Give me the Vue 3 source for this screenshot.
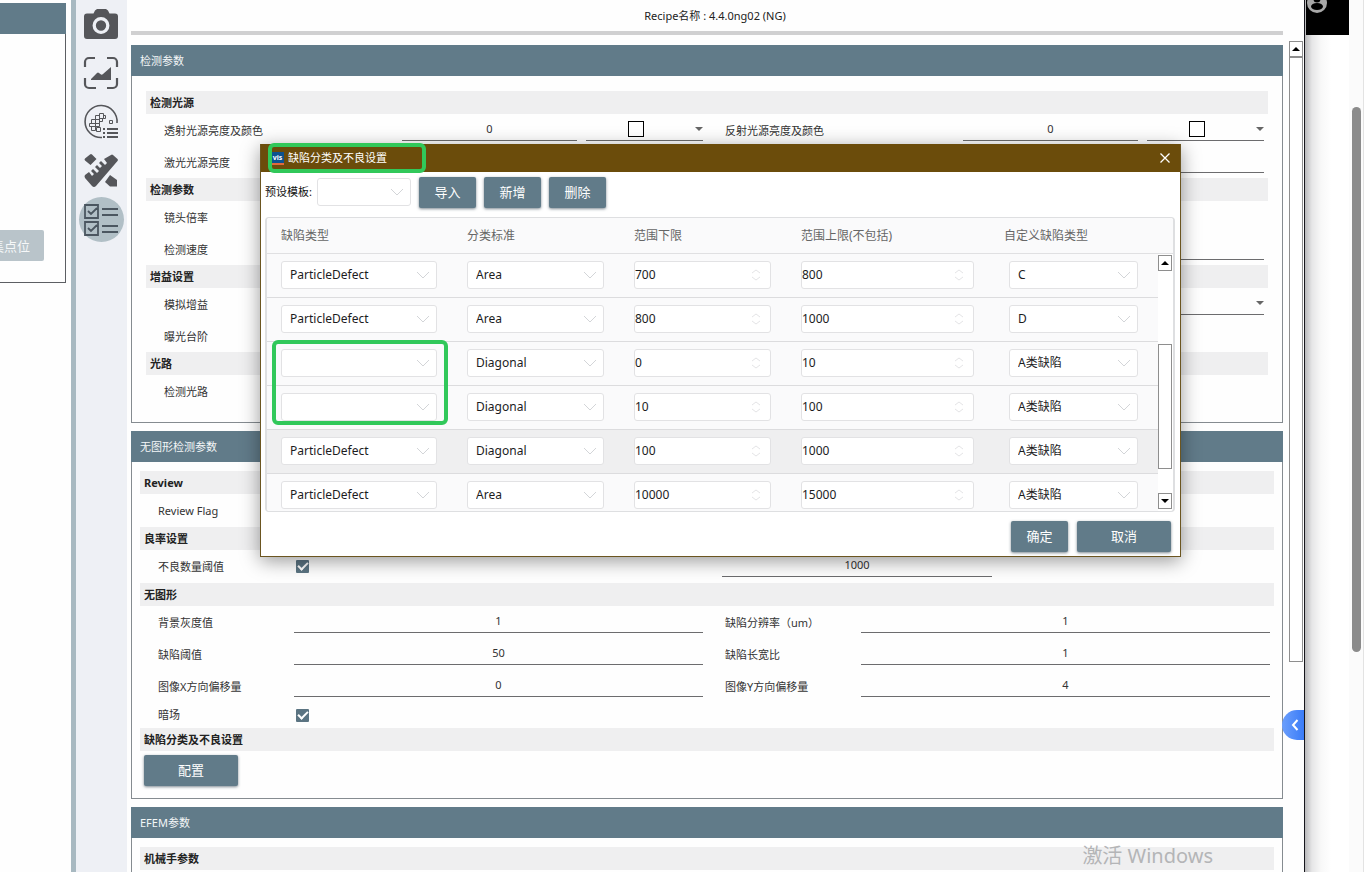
<script setup>
import { ref } from 'vue'

const lightRow = ['透射光源亮度及颜色', '反射光源亮度及颜色']

const grayRows = [
  { a: '背景灰度值', av: '1', b: '缺陷分辨率（um）', bv: '1' },
  { a: '缺陷阈值', av: '50', b: '缺陷长宽比', bv: '1' },
  { a: '图像X方向偏移量', av: '0', b: '图像Y方向偏移量', bv: '4' },
]

const columns = ['缺陷类型', '分类标准', '范围下限', '范围上限(不包括)', '自定义缺陷类型']

const rules = ref([
  { type: 'ParticleDefect', std: 'Area', low: '700', high: '800', cls: 'C' },
  { type: 'ParticleDefect', std: 'Area', low: '800', high: '1000', cls: 'D' },
  { type: '', std: 'Diagonal', low: '0', high: '10', cls: 'A类缺陷' },
  { type: '', std: 'Diagonal', low: '10', high: '100', cls: 'A类缺陷' },
  { type: 'ParticleDefect', std: 'Diagonal', low: '100', high: '1000', cls: 'A类缺陷', active: true },
  { type: 'ParticleDefect', std: 'Area', low: '10000', high: '15000', cls: 'A类缺陷' },
])
</script>

<template>
  <div class="screen">
    <aside class="left">
      <div class="left-head"></div>
      <div class="left-body">
        <button class="point" type="button" disabled>集点位</button>
      </div>
    </aside>
    <div class="divider"></div>

    <nav class="rail">
      <button type="button" aria-label="相机">
        <svg viewBox="0 0 36 36" width="36" height="36"><path fill="#55565a" d="M12 4.500l2-1.500h9l2 1.500 1.500 3H32a3 3 0 0 1 3 3V30a3 3 0 0 1-3 3H4a3 3 0 0 1-3-3V10.500a3 3 0 0 1 3-3h6.500z" /><circle cx="18" cy="19.500" r="6.800" fill="none" stroke="#eef0f5" stroke-width="3.300" /></svg>
      </button>
      <button type="button" aria-label="图像">
        <svg viewBox="0 0 36 36" width="36" height="36" fill="none" stroke="#55565a" stroke-width="2.200"><path d="M2 12V7a4 4 0 0 1 4-4h6M24 3h6a4 4 0 0 1 4 4v5M34 23v6a4 4 0 0 1-4 4h-6M13 33H6a4 4 0 0 1-4-4v-6" /><path d="M8 25v-1l6-6q1-1 2 0l2 1.500q1 .5 2-.5l8-7v13z" fill="#55565a" stroke="none" /></svg>
      </button>
      <button type="button" aria-label="晶圆">
        <svg viewBox="0 0 36 36" width="36" height="36" fill="none" stroke="#55565a"><path stroke-width="1.600" d="M19 33.500A16 16 0 1 1 34 19" /><path stroke-width="1" d="M12.500 11.500h4v4h-4zM8.500 15.500h4v4h-4zM12.500 15.500h4v4h-4zM6.500 19.500h6v3h-6zM12.500 19.500h4v3h-4zM8.500 22.500h4v4h-4zM13.500 23.500h4v4h-4zM16.500 9.500h4v5h-4zM20.500 11.500h2v3h-2zM26.500 16.500h3v3h-3zM16.500 14.500h3v3h-3z" /><path stroke-width="2" d="M24 25h11M24 29h11M24 33h11M20 25h2M20 29h2M20 33h2" /></svg>
      </button>
      <button type="button" aria-label="测量">
        <svg viewBox="0 0 36 36" width="36" height="36" fill="#55565a"><path d="M7 1.500q1-1 2 0L13.500 6 7.500 12 2 7.500q-1-1 0-2z" /><path d="M28 2q1-1 2 0l4.500 4q1 1 0 2L13 33q-2 2-4 0l-7-8q-1-2 0-3l4-3 3 4 2-2-3-3 2-2 4 4 2-2-4-4 2-2 3 3 2-2-3-3 2-2 4 4 2-2-3-4z" /><path d="M27 22l7 5v6.500h-7L22 29z" /></svg>
      </button>
      <button type="button" class="on" aria-label="配方参数">
        <svg viewBox="0 0 36 36" width="36" height="36" fill="none" stroke="#4b5660" stroke-width="1.800"><path d="M2 3h13v13H2zM2 20h13v13H2zM5 9l3 3 6-6M5 26l3 3 6-6M19 7h16M19 13h16M19 24h16M19 30h16" /></svg>
      </button>
    </nav>

    <main class="main">
      <header class="title">Recipe名称 : 4.4.0ng02 (NG)</header>
      <div class="scroller">
        <div class="panels">
          <section class="panel">
            <h2>检测参数</h2>
            <div class="body wide">
              <h3>检测光源</h3>
              <div class="pair">
                <div v-for="(t, i) in lightRow" :key="t" class="half light">
                  <label :for="'l' + i">{{ t }}</label>
                  <input :id="'l' + i" class="line" value="0" />
                  <span class="color">
                    <span class="swatch"></span>
                    <select :aria-label="t + ' 颜色'" class="line"><option></option></select>
                    <i class="tri"></i>
                  </span>
                </div>
              </div>
              <div class="single"><label for="laser">激光光源亮度</label><input id="laser" class="line" /></div>
              <h3>检测参数</h3>
              <div class="single"><label>镜头倍率</label></div>
              <div class="single"><label for="speed">检测速度</label><input id="speed" class="line" /></div>
              <h3>增益设置</h3>
              <div class="single">
                <label for="gain">模拟增益</label>
                <span class="color"><select id="gain" class="line"><option></option></select><i class="tri"></i></span>
              </div>
              <div class="single"><label>曝光台阶</label></div>
              <h3>光路</h3>
              <div class="single"><label>检测光路</label></div>
            </div>
          </section>

          <section class="panel">
            <h2>无图形检测参数</h2>
            <div class="body">
              <h3>Review</h3>
              <div class="group"><div class="single"><label>Review Flag</label></div></div>
              <h3>良率设置</h3>
              <div class="group pair">
                <div class="half tick"><label for="ng">不良数量阈值</label><input id="ng" type="checkbox" checked /></div>
                <div class="limit"><input class="line" aria-label="不良数量阈值" value="1000" /></div>
              </div>
              <h3>无图形</h3>
              <div v-for="(r, i) in grayRows" :key="r.a" class="pair">
                <div class="half"><label :for="'a' + i">{{ r.a }}</label><input :id="'a' + i" class="line" :value="r.av" /></div>
                <div class="half"><label :for="'b' + i">{{ r.b }}</label><input :id="'b' + i" class="line" :value="r.bv" /></div>
              </div>
              <div class="pair short">
                <div class="half tick"><label for="dark">暗场</label><input id="dark" type="checkbox" checked /></div>
              </div>
              <h3>缺陷分类及不良设置</h3>
              <button class="btn large config" type="button">配置</button>
            </div>
          </section>

          <section class="panel">
            <h2>EFEM参数</h2>
            <div class="body">
              <h3>机械手参数</h3>
              <div class="single"></div>
            </div>
          </section>
        </div>
        <div class="vbar">
          <span class="cap"><i class="up"></i></span>
          <span class="thumb"></span>
        </div>
      </div>
    </main>

    <aside class="outer">
      <div class="page">
        <div class="black">
          <svg viewBox="0 0 20 20" width="20" height="20"><circle cx="10" cy="10" r="10" fill="#a8a8a8" /><circle cx="10" cy="6" r="3.500" fill="#000" /><ellipse cx="10" cy="13.500" rx="6" ry="3.500" fill="#000" /></svg>
        </div>
      </div>
      <div class="track"><span></span></div>
    </aside>

    <button class="drawer" type="button" aria-label="展开">
      <svg viewBox="0 0 8 14" width="8" height="14"><path d="M6.500 2L2 7l4.500 5" fill="none" stroke="#fff" stroke-width="2" /></svg>
    </button>

    <div class="watermark">激活 Windows</div>

    <div class="dialog" role="dialog" aria-label="缺陷分类及不良设置">
      <div class="bar">
        <span class="logo">vis</span>
        <span class="name">缺陷分类及不良设置</span>
        <button type="button" class="close" aria-label="关闭">
          <svg viewBox="0 0 12 12" width="12" height="12"><path d="M1.500 1.500l9 9M10.500 1.500l-9 9" stroke="#fff" stroke-width="1.300" /></svg>
        </button>
      </div>
      <div class="tools">
        <label for="tpl">预设模板:</label>
        <span class="box tpl">
          <select id="tpl"><option></option></select>
          <svg class="chev" viewBox="0 0 14 8" width="14" height="8"><path d="M1 1l6 6 6-6" /></svg>
        </span>
        <button class="btn" type="button">导入</button>
        <button class="btn" type="button">新增</button>
        <button class="btn" type="button">删除</button>
      </div>
      <div class="grid">
        <div class="clip">
          <table>
            <colgroup><col class="c1" /><col class="c2" /><col class="c3" /><col class="c4" /><col class="c5" /></colgroup>
            <thead>
              <tr><th v-for="c in columns" :key="c">{{ c }}</th></tr>
            </thead>
            <tbody>
              <tr v-for="(r, i) in rules" :key="i" :class="{ active: r.active }">
                <td v-for="k in ['type', 'std', 'low', 'high', 'cls']" :key="k" :class="{ last: k === 'cls' }">
                  <span v-if="k === 'low' || k === 'high'" class="box num">
                    <input v-model="r[k]" :aria-label="k === 'low' ? '范围下限' : '范围上限'" />
                    <svg class="spin" viewBox="0 0 10 12" width="10" height="12"><path d="M1 4l4-3 4 3M1 8l4 3 4-3" /></svg>
                  </span>
                  <span v-else class="box">
                    <select :aria-label="k"><option>{{ r[k] }}</option></select>
                    <svg class="chev" viewBox="0 0 14 8" width="14" height="8"><path d="M1 1l6 6 6-6" /></svg>
                  </span>
                </td>
              </tr>
            </tbody>
          </table>
        </div>
        <div class="side">
          <div class="side-head"></div>
          <div class="side-bar">
            <span class="cap"><i class="up"></i></span>
            <span class="thumb"></span>
            <span class="cap"><i class="down"></i></span>
          </div>
        </div>
      </div>
      <div class="foot">
        <button class="btn" type="button">确定</button>
        <button class="btn large" type="button">取消</button>
      </div>
      <div class="mark mark-title"></div>
      <div class="mark mark-rows"></div>
    </div>
  </div>
</template>

<style>
html, body { margin: 0; overflow: hidden; background: #fff; }
</style>

<style scoped>
.screen, .screen * { box-sizing: border-box; }
.screen {
  position: relative; display: flex; height: 100vh; overflow: hidden; background: #fefefe;
  font: 11px/16px "Noto Sans", "Noto Sans CJK SC", sans-serif; color: #333;
}
button, input, select { font: inherit; color: inherit; margin: 0; border: 0; padding: 0; background: none; outline: 0; }
select { appearance: none; border-radius: 0; }
h2, h3 { margin: 0; }

.left { width: 66px; padding-top: 3px; flex: none; overflow: hidden; }
.left-head { height: 31px; background: #617b89; }
.left-body { height: 249px; border: 1px solid #5c5f63; border-width: 0 1px 1px 0; padding-top: 196px; }
.point { width: 44px; height: 31px; border-radius: 0 2px 2px 0; background: #b9c4ca; color: #f6f8f9; font-size: 13px; white-space: nowrap; display: flex; justify-content: flex-end; align-items: center; padding-right: 14px; overflow: hidden; }
.divider { flex: none; width: 5px; margin-left: 5px; background: #a8b9c1; }
.rail { flex: none; width: 51px; background: #eef0f5; display: flex; flex-direction: column; align-items: center; gap: 4px; padding-top: 1px; }
.rail button { width: 45px; height: 45px; border-radius: 50%; display: flex; align-items: center; justify-content: center; padding-right: 1px; }
.rail .on { background: #b1bfc6; }

.main { flex: 1; min-width: 0; margin-left: 4px; display: flex; flex-direction: column; border-right: 1px solid #16161c; }
.title { height: 35px; margin-right: 21px; border-bottom: 4px solid #d0d0d1; text-align: center; line-height: 31px; padding-left: 16px; color: #222; }
.scroller { flex: 1; min-height: 0; display: flex; justify-content: space-between; }
.panels { flex: 1; padding-top: 10px; display: flex; flex-direction: column; gap: 8px; }
.panel h2 { height: 31px; background: #617b89; color: #f4f7f8; font-size: 11px; font-weight: 400; line-height: 31px; padding-left: 9px; }
.body { border: 1px solid #858b90; border-top: 0; padding: 9px 8px 12px; }
.body.wide { padding: 15px 14px; }
.body h3 { height: 23px; background: #efeff0; font-size: 11px; line-height: 23px; font-weight: 700; color: #222; padding-left: 4px; }
.group { padding-bottom: 1px; }
.pair { display: grid; grid-template-columns: 1fr 1fr; }
.half, .single { display: flex; align-items: flex-start; height: 32px; padding: 0 4px 0 18px; }
.half label, .single label { flex: none; width: 136px; line-height: 33px; }
.wide .half label, .wide .single label { width: 238px; }
.half > .line, .single > .line { flex: 1; min-width: 0; }
.line { height: 27px; width: 100%; border-bottom: 1px solid #6c6c6e; text-align: center; padding-top: 3px; }
.color { display: grid; flex: 1; align-items: center; }
.light .color { flex: 0 0 117px; margin-left: 9px; }
.color > * { grid-area: 1 / 1; }
.swatch { justify-self: center; width: 16px; height: 16px; border: 1px solid #000; margin: 2px 17px 0 0; background: #fff; }
.tri { justify-self: end; border: 4px solid transparent; border-top-color: #666; border-bottom: 0; margin-top: 2px; }
.tick { align-items: center; }
.limit { padding-left: 15px; }
.limit .line { width: 270px; }
.short .half { height: 26px; }
.short label { line-height: 26px; }
input[type="checkbox"] { appearance: none; width: 13px; height: 13px; margin-left: 2px; border-radius: 1px; background: #5b7482; display: grid; place-items: center; }
input[type="checkbox"]::before { content: ""; width: 8px; height: 4px; border: solid #fff; border-width: 0 0 2px 2px; transform: translateY(-1px) rotate(-45deg); }
.btn { width: 57px; height: 31px; border-radius: 2px; background: #617b89; color: #fff; font-size: 13px; line-height: 31px; box-shadow: 0 1px 3px rgba(40, 60, 75, 0.6); }
.btn.large { width: 94px; }
.config { display: block; margin: 4px 0 0 4px; }

.vbar { flex: none; width: 14px; margin: 6px 1px 0 6px; display: flex; flex-direction: column; }
.cap { flex: none; height: 16px; border: 1px solid #8e8e8e; background: #fff; display: grid; place-items: center; }
.up { border: 4px solid transparent; border-top: 0; border-bottom-color: #000; }
.down { border: 4px solid transparent; border-bottom: 0; border-top-color: #000; }
.thumb { border: 1px solid #8e8e8e; background: #fff; }
.vbar .thumb { height: 605px; }

.outer { flex: none; width: 63px; display: flex; }
.page { flex: 1; background: linear-gradient(90deg, #b9b9bb, #e6e6e7 7px, #f8f8f8 16px, #fff 26px); }
.black { height: 35px; background: #000; overflow: hidden; margin-left: 1px; padding-left: 1px; }
.black svg { display: block; margin-top: -7px; }
.track { width: 19px; background: #fbfbfb; border-right: 4px solid #fff; box-shadow: inset -1px 0 #e3e3e3; padding: 107px 0 0 3px; }
.track span { display: block; width: 9px; height: 545px; border-radius: 5px; background: #8b8b8b; }
.drawer { position: absolute; right: 64px; top: 710px; width: 22px; height: 30px; border-radius: 15px 0 0 15px; background: linear-gradient(90deg, #6c9ffc, #3a7cf8); display: flex; align-items: center; justify-content: center; padding-left: 3px; }
.watermark { position: absolute; right: 155px; top: 842px; font-size: 20px; line-height: 28px; color: #b4b5b7; }

.dialog { position: absolute; left: 260px; right: 187px; top: 144px; border: 1px solid #6b5520; border-top: 0; background: #fff; box-shadow: 0 4px 18px rgba(0, 0, 0, 0.4); padding-bottom: 4px; }
.bar { height: 28px; background: #6b4c0b; color: #fff; display: flex; align-items: center; padding: 0 9px 0 10px; }
.logo { width: 13px; height: 13px; background: #0d528f; border-bottom: 2px solid #e2683c; font-size: 7px; line-height: 11px; font-weight: 700; text-align: center; }
.name { flex: 1; padding-left: 4px; }
.close { width: 12px; height: 12px; display: grid; }
.tools { display: flex; align-items: center; height: 40px; padding-left: 4px; color: #111; }
.tools label { width: 52px; }
.tools .tpl { width: 94px; }
.tools .btn { margin-left: 8px; }
.box { display: grid; align-items: center; height: 28px; border: 1px solid #e2e2e4; border-radius: 3px; background: #fff; font-size: 12px; color: #1c1c1e; }
.box > * { grid-area: 1 / 1; }
.box select { width: 100%; height: 26px; padding-left: 8px; }
.box input { width: 100%; height: 26px; min-width: 0; }
.chev { justify-self: end; margin-right: 6px; fill: none; stroke: #d3d5d8; pointer-events: none; }
.spin { justify-self: end; margin-right: 9px; fill: none; stroke: #e4e4e6; pointer-events: none; }
.grid { display: flex; height: 295px; margin: 5px 5px 0 4px; border: 2px solid #dedfe1; border-radius: 4px; border-top-width: 1px; border-bottom-width: 1px; overflow: hidden; }
.clip { flex: 1; min-width: 0; overflow: hidden; }
table { width: 100%; table-layout: fixed; border-collapse: separate; border-spacing: 0; font-size: 12px; }
.c1 { width: 186px; } .c2 { width: 167px; } .c3 { width: 167px; } .c4 { width: 203px; }
th { height: 36px; padding: 0 0 0 14px; text-align: left; font-weight: 400; color: #666; background: #fafafb; border-bottom: 1px solid #e0e0e2; white-space: nowrap; }
td { height: 44px; padding: 0 16px 2px 14px; background: #fafafb; border-bottom: 1px solid #dcdcde; }
td.last { padding: 0 20px 2px 19px; }
.active td { background: #efeff0; }
.side { flex: none; width: 15px; display: flex; flex-direction: column; }
.side-head { height: 36px; background: #fafafb; border-bottom: 1px solid #e0e0e2; }
.side-bar { flex: 1; display: flex; flex-direction: column; justify-content: space-between; padding: 1px 1px 2px 0; }
.side-bar .thumb { height: 125px; margin-top: 49px; }
.foot { display: flex; justify-content: flex-end; gap: 9px; padding: 9px 9px 0 0; }
.mark { position: absolute; border: 4px solid #31c85a; border-radius: 6px; pointer-events: none; }
.mark-title { left: 7px; top: -1px; width: 158px; height: 30px; }
.mark-rows { left: 11px; top: 196px; width: 176px; height: 85px; }
</style>
